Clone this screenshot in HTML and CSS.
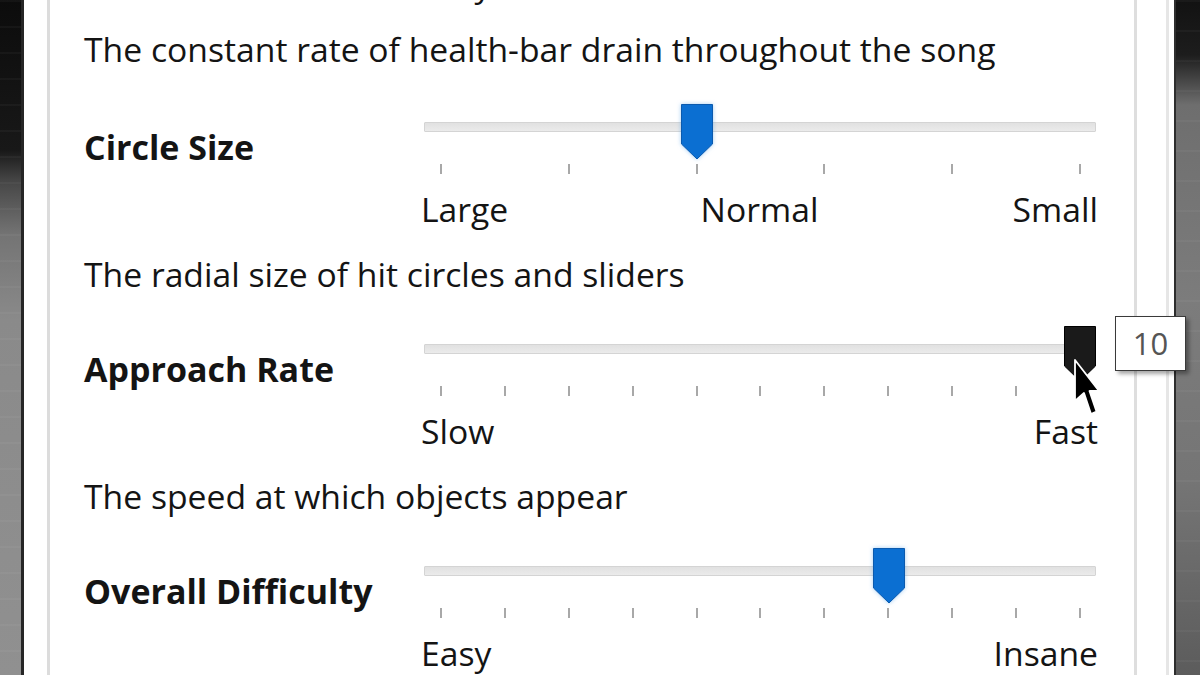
FILE: index.html
```html
<!DOCTYPE html>
<html lang="en">

<head>
    <meta charset="UTF-8">
    <meta name="viewport" content="width=device-width, initial-scale=1.0">
    <title>Difficulty</title>
    <link rel="stylesheet" href="styles.css">
</head>

<body>
    <div class="scene">
        <div class="backdrop backdrop-left"></div>

        <div class="window">
            <div class="groupbox">
                <div class="settings">

                    <!-- HP Drain Rate: scrolled up, only the bottom of its scale shows -->
                    <div class="setting setting-scrolled">
                        <div class="setting-row">
                            <div class="setting-name"></div>
                            <div class="slider">
                                <div class="scale">
                                    <span>Easy</span><span></span><span></span>
                                </div>
                            </div>
                        </div>
                        <p class="setting-desc">The constant rate of health-bar drain throughout the song</p>
                    </div>

                    <!-- Circle Size -->
                    <div class="setting">
                        <div class="setting-row">
                            <div class="setting-name">Circle Size</div>
                            <div class="slider">
                                <div class="slider-body">
                                    <div class="track"></div>
                                    <svg class="thumb" style="left: 257px" width="32" height="56" viewBox="0 0 32 56">
                                        <path d="M0.5 0.5 H31.5 V40 L16 55 L0.5 40 Z" />
                                    </svg>
                                </div>
                                <div class="ticks">
                                    <span></span><span></span><span></span><span></span><span></span><span></span>
                                </div>
                                <div class="scale">
                                    <span>Large</span><span>Normal</span><span>Small</span>
                                </div>
                            </div>
                        </div>
                        <p class="setting-desc">The radial size of hit circles and sliders</p>
                    </div>

                    <!-- Approach Rate (being dragged) -->
                    <div class="setting">
                        <div class="setting-row">
                            <div class="setting-name">Approach Rate</div>
                            <div class="slider">
                                <div class="slider-body">
                                    <div class="track"></div>
                                    <svg class="thumb thumb-active" style="left: 640px" width="32" height="56" viewBox="0 0 32 56">
                                        <path d="M0.5 0.5 H31.5 V40 L16 55 L0.5 40 Z" />
                                    </svg>
                                    <div class="value-tip">10</div>
                                    <svg class="pointer" width="30" height="58" viewBox="0 0 30 58">
                                        <path d="M2 1 L2 42 L11 34 L18 55 L23.5 52.5 L16.5 32 L26 32 Z" />
                                    </svg>
                                </div>
                                <div class="ticks">
                                    <span></span><span></span><span></span><span></span><span></span><span></span>
                                    <span></span><span></span><span></span><span></span><span></span>
                                </div>
                                <div class="scale">
                                    <span>Slow</span><span></span><span>Fast</span>
                                </div>
                            </div>
                        </div>
                        <p class="setting-desc">The speed at which objects appear</p>
                    </div>

                    <!-- Overall Difficulty -->
                    <div class="setting">
                        <div class="setting-row">
                            <div class="setting-name">Overall Difficulty</div>
                            <div class="slider">
                                <div class="slider-body">
                                    <div class="track"></div>
                                    <svg class="thumb" style="left: 449px" width="32" height="56" viewBox="0 0 32 56">
                                        <path d="M0.5 0.5 H31.5 V40 L16 55 L0.5 40 Z" />
                                    </svg>
                                </div>
                                <div class="ticks">
                                    <span></span><span></span><span></span><span></span><span></span><span></span>
                                    <span></span><span></span><span></span><span></span><span></span>
                                </div>
                                <div class="scale">
                                    <span>Easy</span><span></span><span>Insane</span>
                                </div>
                            </div>
                        </div>
                    </div>

                </div>
            </div>
            <div class="window-edge"></div>
        </div>

        <div class="backdrop backdrop-right"></div>
    </div>
</body>

</html>
```
FILE: styles.css
```css
body {
    margin: 0;
    padding: 0;
    font-family: 'Open Sans', 'Noto Sans', sans-serif;
    font-size: 33.7px;
    color: #141414;
    background: #1a1a1a;
    overflow: hidden;
}

.scene {
    display: flex;
    height: 675px;
}

/* blurred game background showing at the sides */
.backdrop {
    flex: none;
}

.backdrop-left {
    width: 21px;
    background:
        repeating-linear-gradient(180deg, rgba(255, 255, 255, 0.035) 0, rgba(255, 255, 255, 0.035) 2px, transparent 2px, transparent 26px),
        linear-gradient(180deg, #0c0c0c 0, #181818 150px, #454545 180px, #747474 235px, #8a8a8a 320px, #909090 100%);
}

.backdrop-right {
    width: 24px;
    background:
        repeating-linear-gradient(180deg, rgba(255, 255, 255, 0.035) 0, rgba(255, 255, 255, 0.035) 2px, transparent 2px, transparent 30px),
        linear-gradient(180deg, #121212 0, #1d1d1d 55px, #6e6e6e 105px, #7c7c7c 300px, #757575 480px, #5c5c5c 100%);
}

.window {
    flex: 1;
    display: flex;
    background-color: #ffffff;
    border-left: 3px solid #262626;
    border-right: 2px solid #2e2e2e;
    padding: 0 5px 0 23px;
}

.groupbox {
    flex: 1;
    border-left: 3px solid #dcdcdc;
    border-right: 3px solid #dedede;
    padding-left: 34px;
}

.window-edge {
    width: 29px;
    border-right: 3px solid #e6e6e6;
}

.settings {
    margin-top: -36px;
}

.setting {
    margin-bottom: 32px;
}

.setting-scrolled {
    margin-bottom: 35px;
}

.setting-row {
    display: grid;
    grid-template-columns: 340px 672px;
}

.setting-name {
    padding-top: 23px;
    line-height: 40px;
    font-weight: 700;
    font-size: 34px;
}

.setting-scrolled .setting-name {
    padding-top: 0;
}

.setting-desc {
    margin: 27px 0 0;
    line-height: 40px;
    white-space: nowrap;
}

.setting-scrolled .setting-desc {
    margin-top: 25px;
}

/* slider */
.slider-body {
    position: relative;
    height: 56px;
}

.track {
    position: absolute;
    left: 0;
    right: 0;
    top: 18px;
    height: 8px;
    background: linear-gradient(180deg, #e1e1e1, #ebebeb);
    border: 1px solid #d4d4d4;
    border-radius: 1px;
}

.thumb {
    position: absolute;
    top: 0;
    display: block;
    filter: drop-shadow(0 0 2px rgba(90, 165, 235, 0.55));
}

.thumb path {
    fill: #0b6fd2;
    stroke: #0b5aae;
    stroke-width: 1;
}

.thumb-active {
    filter: none;
}

.thumb-active path {
    fill: #1a1a1a;
    stroke: #000;
}

.ticks {
    display: flex;
    justify-content: space-between;
    margin-top: 4px;
    padding: 0 15px 0 16px;
    height: 10px;
}

.ticks span {
    width: 2px;
    background-color: #a8a8a8;
}

.scale {
    display: grid;
    grid-template-columns: 1fr auto 1fr;
    margin: 17px -2px 0 -3px;
    line-height: 36px;
}

.setting-scrolled .scale {
    margin-top: 0;
    line-height: 40px;
}

.scale span:last-child {
    justify-self: end;
}

/* value popup shown while dragging */
.value-tip {
    position: absolute;
    left: 691px;
    top: -10px;
    width: 69px;
    height: 53px;
    border: 1px solid #3a3a3a;
    background-color: #ffffff;
    box-shadow: 3px 3px 4px rgba(0, 0, 0, 0.35);
    color: #555;
    font-size: 31px;
    line-height: 53px;
    text-align: center;
    z-index: 2;
}

.pointer {
    position: absolute;
    left: 649px;
    top: 33px;
    z-index: 3;
}

.pointer path {
    fill: #000;
    stroke: #fff;
    stroke-width: 1.8;
    stroke-linejoin: round;
}
```
